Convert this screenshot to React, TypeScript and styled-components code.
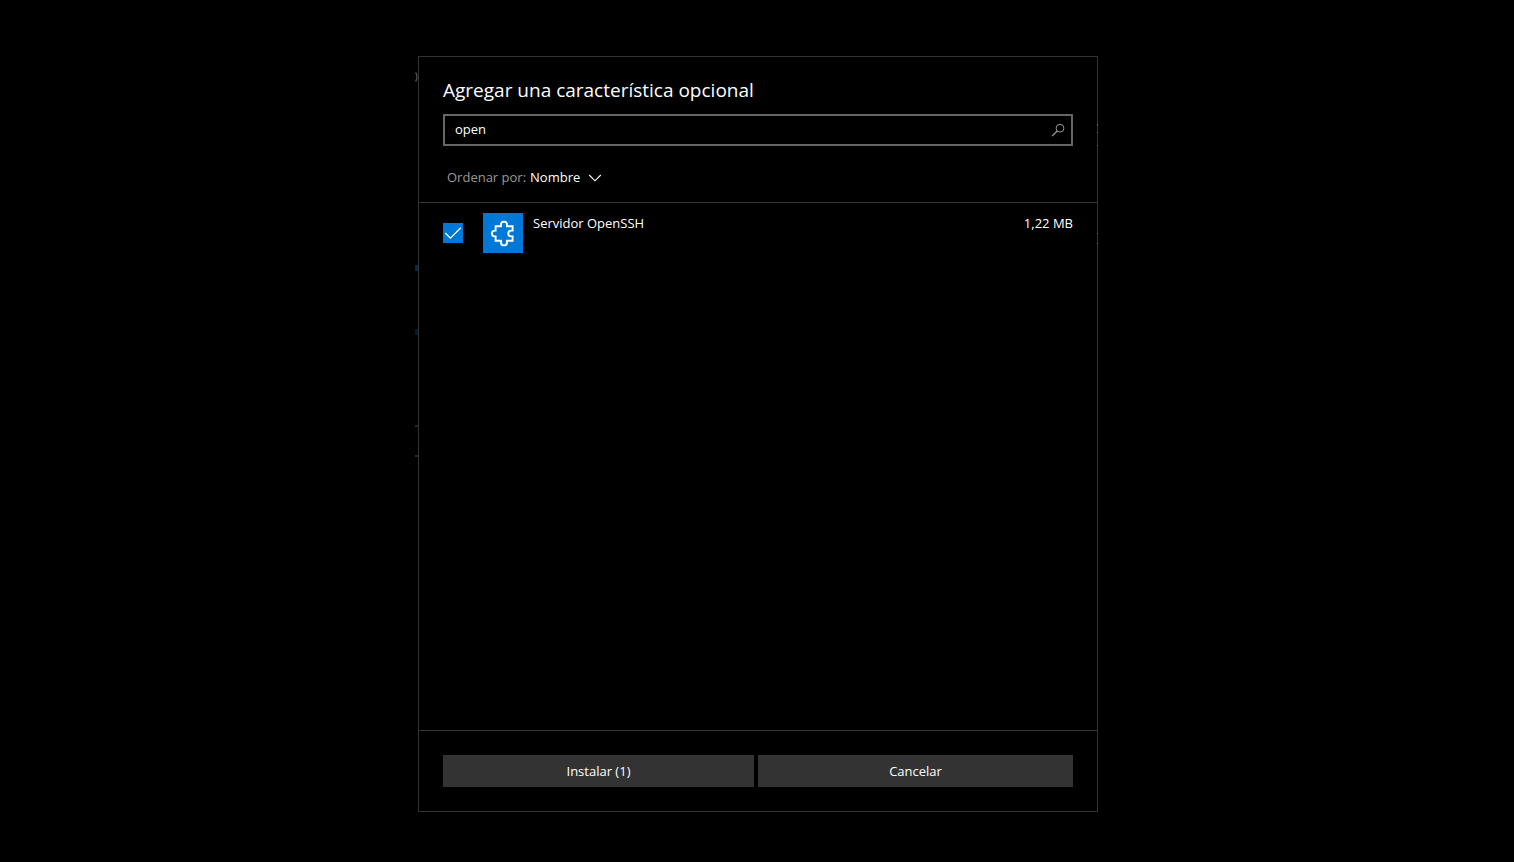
import React, { useId, useState } from 'react';
import styled, { createGlobalStyle } from 'styled-components';

const GlobalStyle = createGlobalStyle`
  *, *::before, *::after { box-sizing: border-box; }
  body {
    margin: 0;
    background: #000;
    color: #fff;
    font-family: "Segoe UI", "Open Sans", "Noto Sans", sans-serif;
    font-size: 13px;
    line-height: 20px;
  }
  button, input, select { font: inherit; color: inherit; }
`;

const Page = styled.main`
  min-height: 100vh;
  display: flex;
  justify-content: center;
  padding: 56px 24px 50px 26px;
`;

const Dialog = styled.section`
  position: relative;
  width: 100%;
  max-width: 680px;
  display: flex;
  flex-direction: column;
  border: 1px solid #333;
`;

/* Slivers of the settings page that stay visible at the dialog's edge. */
const Sliver = styled.span<{ $side: 'left' | 'right'; $top: number; $height: number; $color: string }>`
  position: absolute;
  top: ${(p) => p.$top}px;
  ${(p) => p.$side}: ${(p) => (p.$side === 'left' ? '-4px' : '-1px')};
  width: ${(p) => (p.$side === 'left' ? '3px' : '1px')};
  height: ${(p) => p.$height}px;
  background: ${(p) => p.$color};
`;

const CurveSliver = styled.svg`
  position: absolute;
  top: 14px;
  left: -4px;
  width: 3px;
  height: 12px;
`;

const Header = styled.header`
  padding: 19px 24px 15px;
  border-bottom: 1px solid #333;
`;

const Title = styled.h1`
  margin: 0 0 10px;
  font-size: 19px;
  font-weight: 400;
  line-height: 28px;
`;

const SearchBox = styled.label`
  display: flex;
  align-items: center;
  height: 32px;
  padding: 0 6px 0 10px;
  border: 2px solid #666;
`;

const SearchInput = styled.input`
  flex: 1;
  min-width: 0;
  padding: 0 0 2px;
  border: 0;
  outline: 0;
  background: transparent;
`;

const SortRow = styled.div`
  display: flex;
  align-items: center;
  height: 20px;
  margin-top: 21px;
  padding-left: 4px;
`;

const SortLabel = styled.label`
  margin-right: 4px;
  color: #999;
`;

const SortSelect = styled.select`
  appearance: none;
  padding: 0;
  border: 0;
  outline: 0;
  background: #000;
  field-sizing: content;
`;

const Chevron = styled.svg`
  width: 14px;
  height: 8px;
  margin: 2px 0 0 8px;
  pointer-events: none;
`;

const List = styled.ul`
  flex: 1;
  margin: 0;
  padding: 10px 24px;
  list-style: none;
`;

const Item = styled.li`
  display: flex;
  height: 40px;
`;

const Check = styled.span`
  display: grid;
  align-self: center;
  width: 20px;
  height: 20px;
  margin-right: 20px;
  > * { grid-area: 1 / 1; }
`;

const CheckInput = styled.input`
  appearance: none;
  width: 20px;
  height: 20px;
  margin: 0;
  border: 2px solid #999;
  &:checked { border: 0; background: #0078d7; }
  &:not(:checked) + svg { display: none; }
`;

const CheckMark = styled.svg`
  width: 20px;
  height: 20px;
  pointer-events: none;
`;

const Tile = styled.svg`
  flex: none;
  width: 40px;
  height: 40px;
  margin-right: 10px;
  background: #0078d7;
`;

const ItemName = styled.label`
  flex: 1;
`;

const Footer = styled.footer`
  display: grid;
  grid-template-columns: 311fr 315fr;
  gap: 4px;
  padding: 24px;
  border-top: 1px solid #333;
`;

const Action = styled.button`
  height: 32px;
  padding: 0;
  border: 0;
  background: #333;
`;

export default function App() {
  const id = useId();
  const [query, setQuery] = useState('open');
  const [checked, setChecked] = useState(true);

  return (
    <>
      <GlobalStyle />
      <Page>
        <Dialog role="dialog" aria-labelledby={`${id}-title`}>
          <CurveSliver viewBox="0 0 3 12" aria-hidden="true">
            <path d="M0.6 1.5Q2 3 2 6T0.6 10.5" fill="none" stroke="#555" strokeWidth="1.3" />
          </CurveSliver>
          <Sliver $side="left" $top={208} $height={6} $color="#002a4d" />
          <Sliver $side="left" $top={272} $height={6} $color="#001a2f" />
          <Sliver $side="left" $top={368} $height={2} $color="#262626" />
          <Sliver $side="left" $top={398} $height={2} $color="#262626" />
          <Sliver $side="right" $top={67} $height={2} $color="#666" />
          <Sliver $side="right" $top={75} $height={1} $color="#666" />
          <Sliver $side="right" $top={88} $height={1} $color="#666" />
          <Sliver $side="right" $top={113} $height={3} $color="#1c3a55" />
          <Sliver $side="right" $top={176} $height={1} $color="#666" />
          <Sliver $side="right" $top={186} $height={1} $color="#666" />

          <Header>
            <Title id={`${id}-title`}>Agregar una característica opcional</Title>
            <SearchBox>
              <SearchInput
                type="text"
                aria-label="Buscar"
                value={query}
                onChange={(e) => setQuery(e.target.value)}
              />
              <svg width="14" height="14" viewBox="0 0 14 14" fill="none" stroke="#999" aria-hidden="true">
                <circle cx="9" cy="5.2" r="3.9" />
                <path d="M6.2 8L1.2 13" strokeWidth="1.2" />
              </svg>
            </SearchBox>
            <SortRow>
              <SortLabel htmlFor={`${id}-sort`}>Ordenar por:</SortLabel>
              <SortSelect id={`${id}-sort`}>
                <option>Nombre</option>
              </SortSelect>
              <Chevron viewBox="0 0 14 8" fill="none" stroke="#fff" strokeWidth="1.1" aria-hidden="true">
                <path d="M1.2 1L7 6.8L12.8 1" />
              </Chevron>
            </SortRow>
          </Header>

          <List>
            <Item>
              <Check>
                <CheckInput
                  id={`${id}-item`}
                  type="checkbox"
                  checked={checked}
                  onChange={(e) => setChecked(e.target.checked)}
                />
                <CheckMark viewBox="0 0 20 20" fill="none" stroke="#fff" strokeWidth="1.3" aria-hidden="true">
                  <path d="M2.3 10L7.4 15.1L17.8 4.8" />
                </CheckMark>
              </Check>
              <Tile viewBox="0 0 40 40" fill="none" stroke="#fff" strokeWidth="1.9" aria-hidden="true">
                <path d="M12.6 13.2H18V11.6A3 3 0 0 1 24 11.6V13.2H29.6V17.6H28.2A2.9 2.9 0 0 0 28.2 23.4H29.6V27.8H24V29.4A3 3 0 0 1 18 29.4V27.8H12.6V23.4H11.8A2.9 2.9 0 0 1 11.8 17.6H12.6Z" />
              </Tile>
              <ItemName htmlFor={`${id}-item`}>Servidor OpenSSH</ItemName>
              <span>1,22 MB</span>
            </Item>
          </List>

          <Footer>
            <Action type="button">Instalar (1)</Action>
            <Action type="button">Cancelar</Action>
          </Footer>
        </Dialog>
      </Page>
    </>
  );
}
